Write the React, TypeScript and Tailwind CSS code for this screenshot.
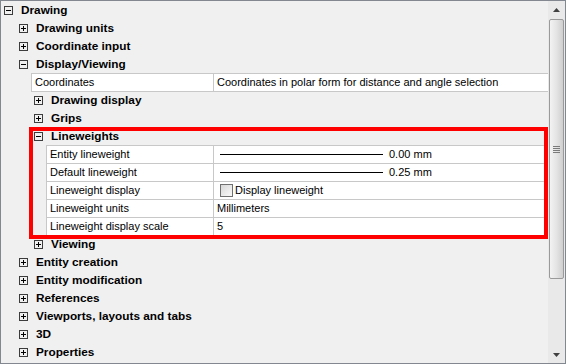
import React from "react";

type Node =
  | { kind: "group"; label: string; level: number; open: boolean }
  | { kind: "props"; level: number; rows: [string, React.ReactNode][] };

function Toggle({ open }: { open: boolean }) {
  return (
    <svg width="9" height="9" viewBox="0 0 9 9" className="shrink-0">
      <rect x="0.5" y="0.5" width="8" height="8" fill="none" stroke="#3c3c3c" />
      <line x1="2" y1="4.5" x2="7" y2="4.5" stroke="#000" />
      {!open && <line x1="4.5" y1="2" x2="4.5" y2="7" stroke="#000" />}
    </svg>
  );
}

function Weight({ value }: { value: string }) {
  return (
    <div className="flex items-center">
      <span className="ml-[3px] h-px w-[163px] bg-black" />
      <span className="ml-[6px]">{value}</span>
    </div>
  );
}

function Check({ label }: { label: string }) {
  return (
    <div className="flex items-center">
      <span className="ml-[3px] h-[13px] w-[13px] border border-[#707070] bg-gradient-to-br from-[#d8d8d8] to-[#fafafa]" />
      <span className="ml-[2px]">{label}</span>
    </div>
  );
}

const tree: Node[] = [
  { kind: "group", label: "Drawing", level: 0, open: true },
  { kind: "group", label: "Drawing units", level: 1, open: false },
  { kind: "group", label: "Coordinate input", level: 1, open: false },
  { kind: "group", label: "Display/Viewing", level: 1, open: true },
  { kind: "props", level: 1, rows: [["Coordinates", "Coordinates in polar form for distance and angle selection"]] },
  { kind: "group", label: "Drawing display", level: 2, open: false },
  { kind: "group", label: "Grips", level: 2, open: false },
  { kind: "group", label: "Lineweights", level: 2, open: true },
  {
    kind: "props",
    level: 2,
    rows: [
      ["Entity lineweight", <Weight value="0.00 mm" />],
      ["Default lineweight", <Weight value="0.25 mm" />],
      ["Lineweight display", <Check label="Display lineweight" />],
      ["Lineweight units", "Millimeters"],
      ["Lineweight display scale", "5"],
    ],
  },
  { kind: "group", label: "Viewing", level: 2, open: false },
  { kind: "group", label: "Entity creation", level: 1, open: false },
  { kind: "group", label: "Entity modification", level: 1, open: false },
  { kind: "group", label: "References", level: 1, open: false },
  { kind: "group", label: "Viewports, layouts and tabs", level: 1, open: false },
  { kind: "group", label: "3D", level: 1, open: false },
  { kind: "group", label: "Properties", level: 1, open: false },
];

const groupPad = ["pl-[3px]", "pl-[18px]", "pl-[33px]"];
const propPad = ["pl-[15px]", "pl-[30px]", "pl-[45px]"];
const nameWidth = ["w-[197px]", "w-[182px]", "w-[167px]"];

function ScrollBar() {
  return (
    <div className="flex w-[17px] shrink-0 flex-col items-center bg-[#e9e9e9]">
      <div className="flex h-[17px] w-full items-center justify-center">
        <svg width="7" height="4" viewBox="0 0 7 4"><path d="M0 4 L3.5 0 L7 4 Z" fill="#404040" /></svg>
      </div>
      <div className="mt-[1px] flex h-[260px] w-[15px] items-center justify-center rounded-[2px] border border-[#9a9a9a] bg-gradient-to-r from-[#f3f3f3] via-[#e4e4e4] to-[#cfcfcf]">
        <div className="flex flex-col gap-[1px]">
          <span className="h-px w-[7px] bg-[#7a7a7a]" />
          <span className="h-px w-[7px] bg-[#7a7a7a]" />
          <span className="h-px w-[7px] bg-[#7a7a7a]" />
          <span className="h-px w-[7px] bg-[#7a7a7a]" />
        </div>
      </div>
      <div className="flex-1" />
      <div className="flex h-[17px] w-full items-center justify-center">
        <svg width="7" height="4" viewBox="0 0 7 4"><path d="M0 0 L3.5 4 L7 0 Z" fill="#404040" /></svg>
      </div>
    </div>
  );
}

export default function App() {
  return (
    <div
      className="relative flex h-[364px] w-[566px] border border-[#828790] bg-[#f0f0f0] text-[11px] text-black"
      style={{ fontFamily: '"Liberation Sans", Arial, sans-serif' }}
    >
      <div className="flex-1 overflow-hidden">
        {tree.map((n, i) =>
          n.kind === "group" ? (
            <div key={i} className={`flex h-[18px] items-center ${groupPad[n.level]}`}>
              <Toggle open={n.open} />
              <span className="ml-[8px] text-[11.8px] leading-[16px] font-bold">{n.label}</span>
            </div>
          ) : (
            <div key={i} className={`-mb-px ${propPad[n.level]}`}>
              <div className="border-b border-l border-[#c8c8c8] bg-white">
                {n.rows.map(([name, value], j) => (
                  <div key={j} className="flex h-[18px] items-center border-t border-[#c8c8c8]">
                    <div className={`flex h-full shrink-0 items-center border-r border-[#c8c8c8] pl-[3px] ${nameWidth[n.level]}`}>{name}</div>
                    <div className="flex h-full flex-1 items-center pl-[3px]">{value}</div>
                  </div>
                ))}
              </div>
            </div>
          )
        )}
      </div>
      <ScrollBar />
      <div className="pointer-events-none absolute left-[28px] top-[126px] h-[112px] w-[519px] border-4 border-[#ff0000]" />
    </div>
  );
}
